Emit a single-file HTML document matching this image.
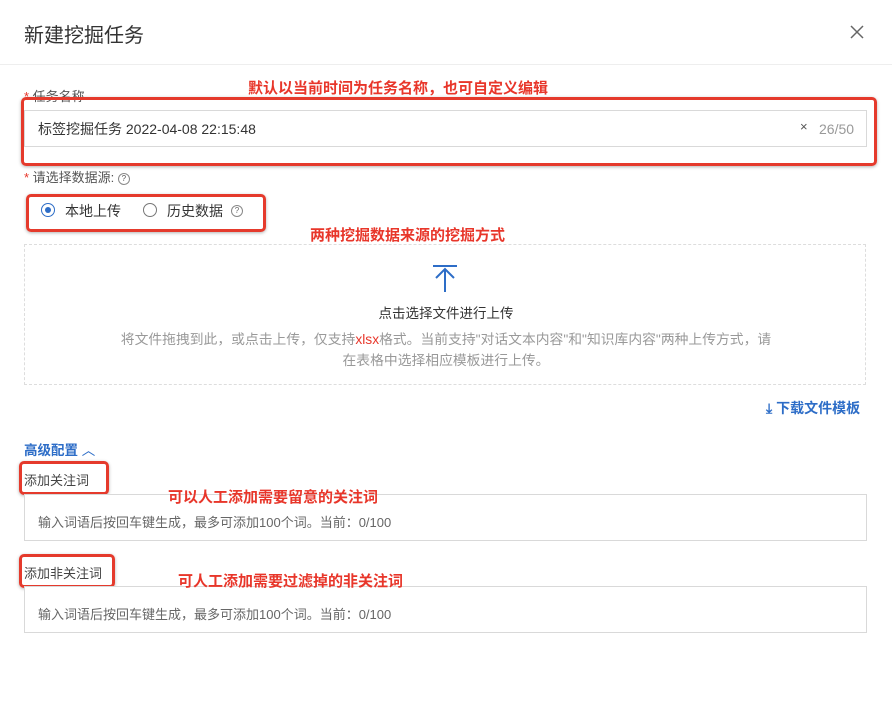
<!DOCTYPE html>
<html><head><meta charset="utf-8"><style>
body{margin:0;width:892px;height:720px;background:#fff;position:relative;overflow:hidden;font-family:"Liberation Sans","Noto Sans CJK SC",sans-serif;color:#333}
.a{position:absolute;white-space:nowrap}
.red{color:#e8362a;font-weight:bold;font-size:15px;z-index:5}
.rb{position:absolute;border:3px solid #e53a2c;border-radius:5px;box-shadow:0 1px 3px rgba(0,0,0,.3)}
.box{position:absolute;border:1px solid #d9d9d9;background:#fff}
.s{font-size:13px;color:#555}
</style></head><body>
<div class="a" style="left:24px;top:19px;font-size:20px;color:#333">新建挖掘任务</div>
<svg class="a" style="left:850px;top:25px" width="14" height="14"><path d="M1 1L13 13M13 1L1 13" stroke="#666" stroke-width="1.5"/></svg>
<div class="a" style="left:0;top:64px;width:892px;height:1px;background:#eee"></div>

<div class="a s" style="left:24px;top:86px"><span style="color:#e8362a">*</span> 任务名称</div>
<div class="box" style="left:24px;top:110px;width:841px;height:35px"></div>
<div class="a" style="left:38px;top:119px;font-size:14px;color:#333">标签挖掘任务 2022-04-08 22:15:48</div>
<div class="a" style="left:800px;top:119px;font-size:13px;color:#555">×</div>
<div class="a" style="left:819px;top:121px;font-size:14px;color:#999">26/50</div>
<div class="rb" style="left:21px;top:97px;width:850px;height:63px"></div>
<div class="a red" style="left:248px;top:77px">默认以当前时间为任务名称，也可自定义编辑</div>

<div class="a s" style="left:24px;top:167px"><span style="color:#e8362a">*</span> 请选择数据源: <span style="display:inline-block;width:10px;height:10px;border:1px solid #888;border-radius:50%;font-size:8px;text-align:center;line-height:10px;vertical-align:1px">?</span></div>
<div class="a" style="left:41px;top:203px;width:12px;height:12px;border:1px solid #2d6dc7;border-radius:50%"><div style="margin:3px;width:6px;height:6px;border-radius:50%;background:#2d6dc7"></div></div>
<div class="a" style="left:65px;top:201px;font-size:14px">本地上传</div>
<div class="a" style="left:143px;top:203px;width:12px;height:12px;border:1px solid #777;border-radius:50%"></div>
<div class="a" style="left:167px;top:201px;font-size:14px">历史数据</div>
<div class="a" style="left:231px;top:205px;width:10px;height:10px;border:1px solid #888;border-radius:50%;font-size:8px;text-align:center;line-height:10px;color:#666">?</div>
<div class="rb" style="left:26px;top:194px;width:234px;height:32px"></div>
<div class="a red" style="left:310px;top:224px">两种挖掘数据来源的挖掘方式</div>

<div class="a" style="left:24px;top:244px;width:840px;height:139px;border:1px dashed #ddd"></div>
<svg class="a" style="left:431px;top:264px" width="28" height="30"><path d="M2 2H26M14 5V28M5 14L14 5L23 14" stroke="#2d6dc7" stroke-width="2" fill="none"/></svg>
<div class="a" style="left:0;width:892px;text-align:center;top:302px;font-size:13.5px;color:#333">点击选择文件进行上传</div>
<div class="a" style="left:0;width:892px;text-align:center;top:328px;font-size:13.8px;color:#999">将文件拖拽到此，或点击上传，仅支持<span style="color:#e8362a">xlsx</span>格式。当前支持"对话文本内容"和"知识库内容"两种上传方式，请</div>
<div class="a" style="left:0;width:892px;text-align:center;top:349px;font-size:13.8px;color:#999">在表格中选择相应模板进行上传。</div>

<div class="a" style="left:766px;top:398px;font-size:14px;color:#2d6dc7;font-weight:bold">⤓ 下载文件模板</div>
<div class="a" style="left:24px;top:439px;font-size:13.5px;color:#2d6dc7;font-weight:bold">高级配置 <span style="font-weight:normal">︿</span></div>

<div class="a s" style="left:24px;top:470px;color:#444">添加关注词</div>
<div class="rb" style="left:19px;top:461px;width:84px;height:28px"></div>
<div class="box" style="left:24px;top:494px;width:841px;height:45px"></div>
<div class="a s" style="left:38px;top:512px;color:#666">输入词语后按回车键生成，最多可添加100个词。当前：0/100</div>
<div class="a red" style="left:168px;top:486px">可以人工添加需要留意的关注词</div>

<div class="a s" style="left:24px;top:563px;color:#444">添加非关注词</div>
<div class="rb" style="left:19px;top:554px;width:90px;height:28px"></div>
<div class="box" style="left:24px;top:586px;width:841px;height:45px"></div>
<div class="a s" style="left:38px;top:604px;color:#666">输入词语后按回车键生成，最多可添加100个词。当前：0/100</div>
<div class="a red" style="left:178px;top:570px">可人工添加需要过滤掉的非关注词</div>
</body></html>
